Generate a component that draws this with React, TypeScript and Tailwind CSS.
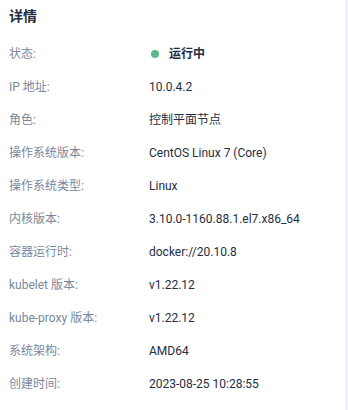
import React from "react";

const rows: [string, string][] = [
  ["IP 地址:", "10.0.4.2"],
  ["角色:", "控制平面节点"],
  ["操作系统版本:", "CentOS Linux 7 (Core)"],
  ["操作系统类型:", "Linux"],
  ["内核版本:", "3.10.0-1160.88.1.el7.x86_64"],
  ["容器运行时:", "docker://20.10.8"],
  ["kubelet 版本:", "v1.22.12"],
  ["kube-proxy 版本:", "v1.22.12"],
  ["系统架构:", "AMD64"],
  ["创建时间:", "2023-08-25 10:28:55"],
];

export default function App() {
  return (
    <div
      className="flex w-[348px] h-[410px] bg-[#eef1f6] overflow-hidden"
      style={{ fontFamily: 'Roboto, "Noto Sans CJK SC", sans-serif' }}
    >
      <div className="w-[345px] h-full bg-white pl-[9px]">
        <div className="h-[37px] pt-[6px] text-[14px] leading-[20px] font-bold text-[#242e42]">
          详情
        </div>
        <div className="flex flex-col">
          <div className="flex items-center h-[33px] text-[12px]">
            <div className="w-[140px] text-[#79879c]">状态:</div>
            <div className="flex items-center text-[#242e42] font-bold">
              <span className="ml-[2px] w-[8px] h-[8px] rounded-full bg-[#55bc8a]" />
              <span className="ml-[10px]">运行中</span>
            </div>
          </div>
          {rows.map(([k, v]) => (
            <div key={k} className="flex items-center h-[33px] text-[12px]">
              <div className="w-[140px] text-[#79879c]">{k}</div>
              <div className="text-[#242e42]">{v}</div>
            </div>
          ))}
        </div>
      </div>
    </div>
  );
}
